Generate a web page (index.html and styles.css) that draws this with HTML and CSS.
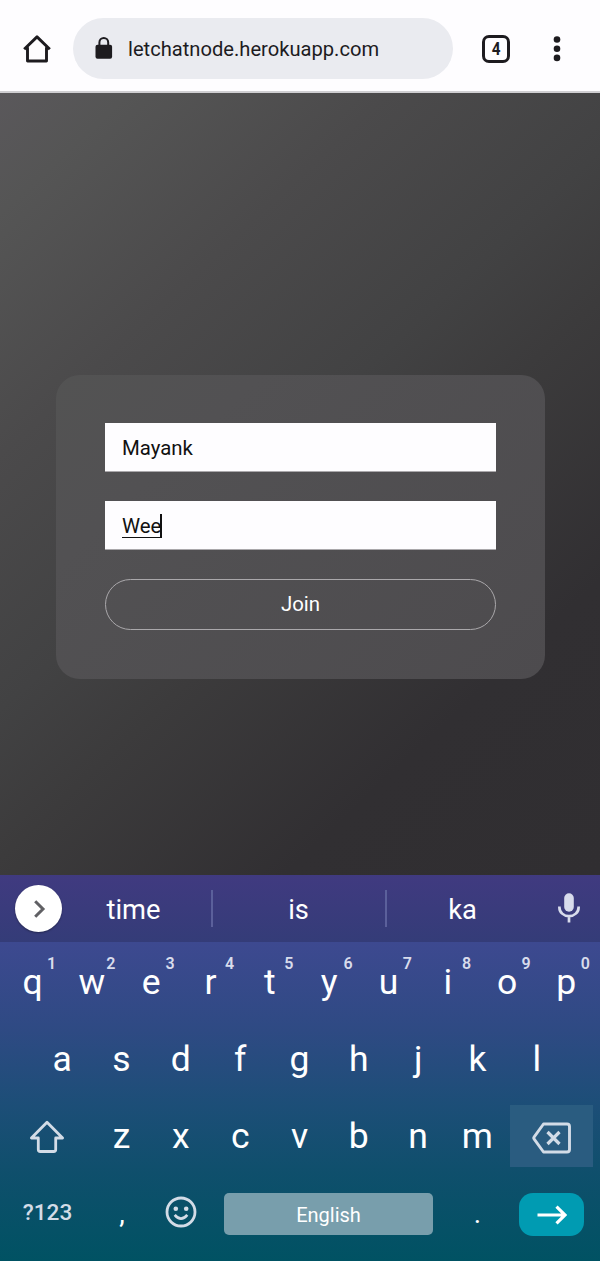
FILE: index.html
```html
<!DOCTYPE html>
<html lang="en">
<head>
<meta charset="utf-8">
<title>Let Chat</title>
<link rel="stylesheet" href="styles.css">
</head>
<body>
<header class="browser-bar">
  <svg class="home" width="30" height="30" viewBox="0 0 30 30"><path d="M2.2 15.3 15 2.9 27.8 15.3M5.5 13.2V27h19V13.2" fill="none" stroke="#1d1b1f" stroke-width="2.9" stroke-linejoin="round"/></svg>
  <div class="address">
    <svg class="lock" width="18" height="22" viewBox="0 0 18 22"><rect x=".5" y="7.7" width="16.6" height="14" rx="2" fill="#1d1b1f"/><path d="M4.4 9V5.4a4.4 4.4 0 0 1 8.8 0V9" fill="none" stroke="#1d1b1f" stroke-width="2"/></svg>
    <span class="url">letchatnode.herokuapp.com</span>
  </div>
  <span class="tabs"><span class="count">4</span></span>
  <svg class="menu" width="8" height="26" viewBox="0 0 8 26"><g fill="#1d1b1f"><circle cx="4" cy="3.5" r="3.3"/><circle cx="4" cy="12.7" r="3.3"/><circle cx="4" cy="21.9" r="3.3"/></g></svg>
</header>
<main class="page">
  <form class="card">
    <div class="field">Mayank</div>
    <div class="field"><span class="composing">Wee</span></div>
    <button class="join" type="button">Join</button>
  </form>
</main>
<section class="keyboard">
  <div class="suggestions">
    <span class="expand"><svg width="16" height="20" viewBox="0 0 16 20"><path d="M4.2 2.2 12 10l-7.8 7.8" fill="none" stroke="#606064" stroke-width="3"/></svg></span>
    <span class="word">time</span>
    <span class="word">is</span>
    <span class="word">ka</span>
    <svg class="mic" width="22" height="30" viewBox="0 0 22 30"><rect x="6.2" y=".3" width="9.6" height="18.4" rx="4.8" fill="#d8dcec"/><path d="M1.4 13.6v.8a9.6 8.8 0 0 0 19.2 0v-.8M11 23v6.6" fill="none" stroke="#d8dcec" stroke-width="2.7"/></svg>
  </div>
  <div class="keys">
    <div class="row">
      <span class="key">q<sup>1</sup></span><span class="key">w<sup>2</sup></span><span class="key">e<sup>3</sup></span><span class="key">r<sup>4</sup></span><span class="key">t<sup>5</sup></span><span class="key">y<sup>6</sup></span><span class="key">u<sup>7</sup></span><span class="key">i<sup>8</sup></span><span class="key">o<sup>9</sup></span><span class="key">p<sup>0</sup></span>
    </div>
    <div class="row home-row">
      <span class="key">a</span><span class="key">s</span><span class="key">d</span><span class="key">f</span><span class="key">g</span><span class="key">h</span><span class="key">j</span><span class="key">k</span><span class="key">l</span>
    </div>
    <div class="row">
      <span class="key wide shift"><svg width="36" height="34" viewBox="0 0 36 34"><path d="M18 2.2 2.4 18H9.3V29.5q0 2 2 2h13.4q2 0 2-2V18h6.9Z" fill="none" stroke="#d3dce7" stroke-width="2.8" stroke-linejoin="round"/></svg></span>
      <span class="key">z</span><span class="key">x</span><span class="key">c</span><span class="key">v</span><span class="key">b</span><span class="key">n</span><span class="key">m</span>
      <span class="key wide erase"><svg width="40" height="32" viewBox="0 0 40 32"><path d="M11.5 2H35q2.5 0 2.5 2.5v23q0 2.5-2.5 2.5H11.5L2.2 17.2q-.9-1.2 0-2.4Z" fill="none" stroke="#d3dce7" stroke-width="2.9" stroke-linejoin="round"/><path d="m15.5 10 12 12m0-12-12 12" stroke="#d3dce7" stroke-width="3.2"/></svg></span>
    </div>
    <div class="row bottom">
      <span class="key symbols">?123</span>
      <span class="key comma">,</span>
      <span class="key smiley"><svg width="32" height="32" viewBox="0 0 32 32"><circle cx="16" cy="16" r="14" fill="none" stroke="#d3dce7" stroke-width="2.8"/><circle cx="10.8" cy="12.7" r="2.3" fill="#d3dce7"/><circle cx="21.2" cy="12.7" r="2.3" fill="#d3dce7"/><path d="M9.7 18.8q6.3 7.6 12.6 0" fill="none" stroke="#d3dce7" stroke-width="2.7"/></svg></span>
      <span class="space">English</span>
      <span class="key period">.</span>
      <span class="enter"><svg width="30" height="20" viewBox="0 0 30 20"><path d="M.5 10H28M19.5 1.7 28 10l-8.5 8.3" fill="none" stroke="#fff" stroke-width="3.2"/></svg></span>
    </div>
  </div>
</section>
</body>
</html>
```

FILE: styles.css
```css
* { box-sizing: border-box; }
body {
  margin: 0;
  width: 600px;
  height: 1261px;
  display: flex;
  flex-direction: column;
  overflow: hidden;
  font-family: Roboto, sans-serif;
}
svg { display: block; flex: none; }

.browser-bar {
  height: 93px;
  flex: none;
  display: flex;
  align-items: center;
  padding: 0 39px 0 22px;
  background: #fefdff;
  border-bottom: 2px solid #cfced1;
}
.home { margin-top: 6px; }
.address {
  width: 380px;
  height: 61px;
  margin: 5px 29px 0 21px;
  padding-left: 22px;
  display: flex;
  align-items: center;
  border-radius: 31px;
  background: #eaebf0;
}
.lock { margin-top: -1px; }
.url {
  margin: 2px 0 0 15px;
  font-size: 20.15px;
  color: #1d1b1f;
}
.tabs {
  width: 28px;
  height: 28px;
  margin-top: 6px;
  display: grid;
  place-items: center;
  border: 3px solid #1d1b1f;
  border-radius: 7px;
  font-size: 18px;
  line-height: 22px;
  font-weight: 700;
  color: #1d1b1f;
}
.count { transform: scaleX(.85); }
.menu { margin: 7px 0 0 auto; }

.page {
  height: 782px;
  flex: none;
  display: flex;
  justify-content: center;
  align-items: flex-start;
  padding: 282px 0 0 1px;
  background: linear-gradient(137deg, #5a585b 0%, #555555 9%, #4b4a4b 27%, #424243 46%, #3c3b3c 57%, #312f32 78%, #302e31 100%);
}
.card {
  width: 489px;
  height: 304px;
  padding: 48px 49px;
  border-radius: 24px;
  background: linear-gradient(137deg, #535353, #525153 25%, #4d4b4e);
}
.field {
  height: 49px;
  margin-bottom: 29px;
  padding: 1px 17px 0;
  display: flex;
  align-items: center;
  background: #fefdff;
  border-bottom: 1px solid #aaa8ab;
  font-size: 20.4px;
  color: #111;
}
.composing {
  width: 40px;
  height: 24px;
  border-bottom: 1px solid #111;
  border-right: 2px solid #111;
  line-height: 24px;
  white-space: nowrap;
}
.join {
  width: 100%;
  height: 51px;
  display: block;
  padding: 0 0 1px;
  border: 1px solid #aaa8ab;
  border-radius: 26px;
  background: none;
  color: #fff;
  font: 20.4px Roboto, sans-serif;
}

.keyboard { flex: 1; display: flex; flex-direction: column; color: #fff; }
.suggestions {
  height: 67px;
  display: grid;
  grid-template-columns: 41px 157px 174px 171px 22px;
  align-items: center;
  padding-left: 15px;
  background: linear-gradient(#403a80, #343c78);
}
.expand {
  width: 47px;
  height: 47px;
  display: grid;
  place-items: center;
  border-radius: 50%;
  background: #fff;
  box-shadow: 0 1px 2px #0005;
}
.word {
  height: 37px;
  display: grid;
  place-items: center;
  padding-top: 2px;
  font-size: 27.3px;
  line-height: 34px;
}
.word:nth-child(2), .word:nth-child(3) { border-right: 2px solid #5b609b; }
.word:nth-child(3) { padding-right: 1px; }
.word:nth-child(4) { padding-right: 20px; }
.mic { margin-top: -1px; }
.keys {
  flex: 1;
  background: linear-gradient(#3d4990, #2e4a83 28%, #1d4e78 50%, #0f4f6c 72%, #005263);
}
.row { display: flex; height: 77px; padding: 0 4px 0 3px; }
.home-row { padding: 0 33.5px 0 32.5px; }
.key {
  position: relative;
  flex: 1 1 0;
  display: grid;
  place-items: center;
  padding-top: 2px;
  font-size: 35.5px;
}
.key sup {
  position: absolute;
  left: 44px;
  top: 12px;
  font-size: 16px;
  line-height: 20px;
  font-weight: 600;
  color: #d8dcec;
}
.wide { flex-grow: 1.5; }
.shift svg { margin-top: 2px; }
.erase::before {
  content: "";
  position: absolute;
  inset: 9px 3px 6px 3px;
  background: #2a5c80;
}
.erase svg { position: relative; margin-top: 4px; }
.bottom { height: 87px; align-items: flex-start; }
.space {
  width: 209px;
  height: 42px;
  margin: 20px 0 0 14px;
  display: grid;
  place-items: center;
  padding-top: 2px;
  border-radius: 5px;
  background: #789eac;
  font-size: 20px;
}
.enter {
  width: 65px;
  height: 43px;
  margin-top: 20px;
  display: grid;
  place-items: center;
  border-radius: 14px;
  background: #009bb2;
}
.bottom .key { flex: none; height: 77px; }
.bottom .symbols { width: 89px; padding-top: 2px; font-size: 22.6px; font-weight: 500; color: #d3dce7; }
.bottom .comma { width: 60px; padding-top: 4px; font-size: 28px; }
.bottom .smiley { width: 58px; padding-top: 1px; }
.bottom .period { width: 86px; padding: 4px 0 0 3px; font-size: 28px; }
```
